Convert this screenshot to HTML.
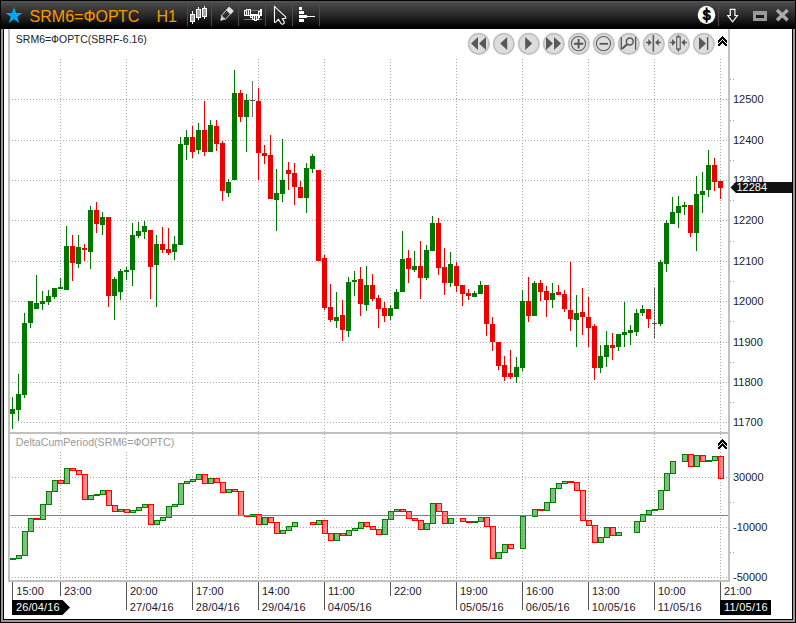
<!DOCTYPE html>
<html><head><meta charset="utf-8"><title>SRM6=ФОРТС H1</title>
<style>
html,body{margin:0;padding:0;background:#fff;}
body{width:796px;height:623px;overflow:hidden;position:relative;font-family:"Liberation Sans", sans-serif;}
svg{position:absolute;left:0;top:0;display:block}
text{font-family:"Liberation Sans", sans-serif;}
.ce{shape-rendering:crispEdges}
</style></head><body>
<svg width="796" height="623" viewBox="0 0 796 623">
<defs>
<linearGradient id="tb" x1="0" y1="0" x2="0" y2="1">
<stop offset="0" stop-color="#4c4c4c"/><stop offset="0.5" stop-color="#292929"/><stop offset="0.98" stop-color="#000"/><stop offset="1" stop-color="#000"/>
</linearGradient>
<radialGradient id="bt" cx="0.5" cy="0.5" r="0.5">
<stop offset="0" stop-color="#e0e0e0"/><stop offset="0.80" stop-color="#dcdcdc"/><stop offset="0.86" stop-color="#c0c0c0"/><stop offset="0.95" stop-color="#c4c4c4"/><stop offset="1" stop-color="#e2e2e2"/>
</radialGradient>
</defs>

<g class="ce">
<rect x="0" y="0" width="796" height="623" fill="#000"/>
<rect x="1" y="1" width="794" height="621" fill="#999"/>
<rect x="3" y="3" width="790" height="617" fill="#000"/>
<rect x="4" y="29" width="788" height="590" fill="#fff"/>
<rect x="0" y="0" width="796" height="29" fill="#000"/><rect x="1" y="1" width="794" height="1" fill="#565656"/><rect x="1" y="2" width="794" height="26" fill="url(#tb)"/>
<rect x="8" y="29" width="2" height="553" fill="#c0c0c0"/>
<rect x="728" y="29" width="2" height="553" fill="#c0c0c0"/>
<rect x="8" y="580" width="722" height="2" fill="#c0c0c0"/>
<rect x="8" y="432" width="722" height="2" fill="#c0c0c0"/>
</g>
<g class="ce" stroke="#a8a8a8" stroke-width="1" stroke-dasharray="1 2" fill="none">
<line x1="9" y1="99.5" x2="727" y2="99.5"/>
<line x1="9" y1="140.5" x2="727" y2="140.5"/>
<line x1="9" y1="180.5" x2="727" y2="180.5"/>
<line x1="9" y1="220.5" x2="727" y2="220.5"/>
<line x1="9" y1="261.5" x2="727" y2="261.5"/>
<line x1="9" y1="301.5" x2="727" y2="301.5"/>
<line x1="9" y1="342.5" x2="727" y2="342.5"/>
<line x1="9" y1="382.5" x2="727" y2="382.5"/>
<line x1="9" y1="422.5" x2="727" y2="422.5"/>
<line x1="9" y1="477.5" x2="727" y2="477.5"/>
<line x1="9" y1="527.5" x2="727" y2="527.5"/>
<line x1="9" y1="577.5" x2="727" y2="577.5"/>
<line x1="60.5" y1="59" x2="60.5" y2="432"/>
<line x1="60.5" y1="452" x2="60.5" y2="580"/><rect x="60" y="434" width="1" height="1" fill="#a8a8a8" stroke="none"/>
<line x1="126.5" y1="59" x2="126.5" y2="432"/>
<line x1="126.5" y1="452" x2="126.5" y2="580"/><rect x="126" y="434" width="1" height="1" fill="#a8a8a8" stroke="none"/>
<line x1="192.5" y1="59" x2="192.5" y2="432"/>
<line x1="192.5" y1="434" x2="192.5" y2="580"/>
<line x1="258.5" y1="59" x2="258.5" y2="432"/>
<line x1="258.5" y1="434" x2="258.5" y2="580"/>
<line x1="324.5" y1="59" x2="324.5" y2="432"/>
<line x1="324.5" y1="434" x2="324.5" y2="580"/>
<line x1="390.5" y1="59" x2="390.5" y2="432"/>
<line x1="390.5" y1="434" x2="390.5" y2="580"/>
<line x1="456.5" y1="59" x2="456.5" y2="432"/>
<line x1="456.5" y1="434" x2="456.5" y2="580"/>
<line x1="522.5" y1="59" x2="522.5" y2="432"/>
<line x1="522.5" y1="434" x2="522.5" y2="580"/>
<line x1="588.5" y1="59" x2="588.5" y2="432"/>
<line x1="588.5" y1="434" x2="588.5" y2="580"/>
<line x1="654.5" y1="59" x2="654.5" y2="432"/>
<line x1="654.5" y1="434" x2="654.5" y2="580"/>
<line x1="720.5" y1="59" x2="720.5" y2="432"/>
<line x1="720.5" y1="434" x2="720.5" y2="580"/>
</g>
<g class="ce" fill="#a8a8a8">
<rect x="730" y="79" width="1" height="1"/><rect x="733" y="79" width="1" height="1"/>
<rect x="730" y="120" width="1" height="1"/><rect x="733" y="120" width="1" height="1"/>
<rect x="730" y="160" width="1" height="1"/><rect x="733" y="160" width="1" height="1"/>
<rect x="730" y="200" width="1" height="1"/><rect x="733" y="200" width="1" height="1"/>
<rect x="730" y="241" width="1" height="1"/><rect x="733" y="241" width="1" height="1"/>
<rect x="730" y="281" width="1" height="1"/><rect x="733" y="281" width="1" height="1"/>
<rect x="730" y="321" width="1" height="1"/><rect x="733" y="321" width="1" height="1"/>
<rect x="730" y="362" width="1" height="1"/><rect x="733" y="362" width="1" height="1"/>
<rect x="730" y="402" width="1" height="1"/><rect x="733" y="402" width="1" height="1"/>
<rect x="730" y="502" width="1" height="1"/><rect x="733" y="502" width="1" height="1"/>
<rect x="730" y="552" width="1" height="1"/><rect x="733" y="552" width="1" height="1"/>
</g>
<g class="ce">
<rect x="12" y="397" width="1" height="32" fill="#007800"/>
<rect x="10" y="409" width="5" height="5" fill="#007800"/>
<rect x="18" y="374" width="1" height="47" fill="#007800"/>
<rect x="16" y="394" width="5" height="16" fill="#007800"/>
<rect x="24" y="313" width="1" height="85" fill="#007800"/>
<rect x="22" y="323" width="5" height="72" fill="#007800"/>
<rect x="30" y="301" width="1" height="27" fill="#007800"/>
<rect x="28" y="301" width="5" height="22" fill="#007800"/>
<rect x="36" y="275" width="1" height="34" fill="#007800"/>
<rect x="34" y="303" width="5" height="6" fill="#007800"/>
<rect x="42" y="291" width="1" height="19" fill="#007800"/>
<rect x="40" y="301" width="5" height="3" fill="#007800"/>
<rect x="48" y="290" width="1" height="15" fill="#007800"/>
<rect x="46" y="296" width="5" height="6" fill="#007800"/>
<rect x="54" y="288" width="1" height="11" fill="#007800"/>
<rect x="52" y="288" width="5" height="9" fill="#007800"/>
<rect x="60" y="278" width="1" height="11" fill="#007800"/>
<rect x="58" y="287" width="5" height="2" fill="#007800"/>
<rect x="66" y="226" width="1" height="64" fill="#007800"/>
<rect x="64" y="246" width="5" height="44" fill="#007800"/>
<rect x="72" y="235" width="1" height="46" fill="#ee0000"/>
<rect x="70" y="246" width="5" height="17" fill="#ee0000"/>
<rect x="78" y="235" width="1" height="33" fill="#007800"/>
<rect x="76" y="247" width="5" height="17" fill="#007800"/>
<rect x="84" y="244" width="1" height="17" fill="#ee0000"/>
<rect x="82" y="248" width="5" height="2" fill="#ee0000"/>
<rect x="90" y="206" width="1" height="63" fill="#007800"/>
<rect x="88" y="210" width="5" height="42" fill="#007800"/>
<rect x="96" y="202" width="1" height="31" fill="#ee0000"/>
<rect x="94" y="210" width="5" height="14" fill="#ee0000"/>
<rect x="102" y="212" width="1" height="23" fill="#007800"/>
<rect x="100" y="217" width="5" height="8" fill="#007800"/>
<rect x="108" y="217" width="1" height="90" fill="#ee0000"/>
<rect x="106" y="217" width="5" height="79" fill="#ee0000"/>
<rect x="114" y="277" width="1" height="43" fill="#007800"/>
<rect x="112" y="279" width="5" height="17" fill="#007800"/>
<rect x="120" y="269" width="1" height="31" fill="#007800"/>
<rect x="118" y="271" width="5" height="21" fill="#007800"/>
<rect x="126" y="267" width="1" height="13" fill="#007800"/>
<rect x="124" y="270" width="5" height="2" fill="#007800"/>
<rect x="132" y="223" width="1" height="63" fill="#007800"/>
<rect x="130" y="235" width="5" height="35" fill="#007800"/>
<rect x="138" y="222" width="1" height="16" fill="#007800"/>
<rect x="136" y="231" width="5" height="5" fill="#007800"/>
<rect x="144" y="221" width="1" height="18" fill="#007800"/>
<rect x="142" y="226" width="5" height="6" fill="#007800"/>
<rect x="150" y="230" width="1" height="69" fill="#ee0000"/>
<rect x="148" y="230" width="5" height="37" fill="#ee0000"/>
<rect x="156" y="235" width="1" height="72" fill="#007800"/>
<rect x="154" y="244" width="5" height="21" fill="#007800"/>
<rect x="162" y="227" width="1" height="26" fill="#ee0000"/>
<rect x="160" y="244" width="5" height="6" fill="#ee0000"/>
<rect x="168" y="228" width="1" height="27" fill="#ee0000"/>
<rect x="166" y="249" width="5" height="4" fill="#ee0000"/>
<rect x="174" y="236" width="1" height="24" fill="#007800"/>
<rect x="172" y="244" width="5" height="8" fill="#007800"/>
<rect x="180" y="137" width="1" height="108" fill="#007800"/>
<rect x="178" y="144" width="5" height="101" fill="#007800"/>
<rect x="186" y="130" width="1" height="30" fill="#007800"/>
<rect x="184" y="137" width="5" height="8" fill="#007800"/>
<rect x="192" y="126" width="1" height="32" fill="#ee0000"/>
<rect x="190" y="137" width="5" height="15" fill="#ee0000"/>
<rect x="198" y="123" width="1" height="31" fill="#007800"/>
<rect x="196" y="130" width="5" height="20" fill="#007800"/>
<rect x="204" y="101" width="1" height="55" fill="#ee0000"/>
<rect x="202" y="130" width="5" height="22" fill="#ee0000"/>
<rect x="210" y="120" width="1" height="32" fill="#007800"/>
<rect x="208" y="125" width="5" height="27" fill="#007800"/>
<rect x="216" y="120" width="1" height="31" fill="#ee0000"/>
<rect x="214" y="126" width="5" height="18" fill="#ee0000"/>
<rect x="222" y="141" width="1" height="60" fill="#ee0000"/>
<rect x="220" y="143" width="5" height="48" fill="#ee0000"/>
<rect x="228" y="179" width="1" height="18" fill="#007800"/>
<rect x="226" y="182" width="5" height="11" fill="#007800"/>
<rect x="234" y="70" width="1" height="110" fill="#007800"/>
<rect x="232" y="93" width="5" height="87" fill="#007800"/>
<rect x="240" y="90" width="1" height="32" fill="#ee0000"/>
<rect x="238" y="93" width="5" height="24" fill="#ee0000"/>
<rect x="246" y="94" width="1" height="58" fill="#007800"/>
<rect x="244" y="100" width="5" height="17" fill="#007800"/>
<rect x="252" y="81" width="1" height="36" fill="#707070"/>
<rect x="250" y="100" width="5" height="1" fill="#505050"/>
<rect x="258" y="88" width="1" height="92" fill="#ee0000"/>
<rect x="256" y="101" width="5" height="52" fill="#ee0000"/>
<rect x="264" y="145" width="1" height="19" fill="#ee0000"/>
<rect x="262" y="153" width="5" height="3" fill="#ee0000"/>
<rect x="270" y="135" width="1" height="64" fill="#ee0000"/>
<rect x="268" y="155" width="5" height="44" fill="#ee0000"/>
<rect x="276" y="169" width="1" height="62" fill="#007800"/>
<rect x="274" y="193" width="5" height="7" fill="#007800"/>
<rect x="282" y="139" width="1" height="63" fill="#007800"/>
<rect x="280" y="180" width="5" height="14" fill="#007800"/>
<rect x="288" y="162" width="1" height="28" fill="#ee0000"/>
<rect x="286" y="170" width="5" height="4" fill="#ee0000"/>
<rect x="294" y="163" width="1" height="42" fill="#ee0000"/>
<rect x="292" y="173" width="5" height="14" fill="#ee0000"/>
<rect x="300" y="181" width="1" height="17" fill="#ee0000"/>
<rect x="298" y="187" width="5" height="11" fill="#ee0000"/>
<rect x="306" y="163" width="1" height="50" fill="#007800"/>
<rect x="304" y="168" width="5" height="30" fill="#007800"/>
<rect x="312" y="154" width="1" height="19" fill="#007800"/>
<rect x="310" y="156" width="5" height="13" fill="#007800"/>
<rect x="318" y="170" width="1" height="91" fill="#ee0000"/>
<rect x="316" y="170" width="5" height="91" fill="#ee0000"/>
<rect x="324" y="255" width="1" height="55" fill="#ee0000"/>
<rect x="322" y="258" width="5" height="50" fill="#ee0000"/>
<rect x="330" y="284" width="1" height="38" fill="#ee0000"/>
<rect x="328" y="307" width="5" height="13" fill="#ee0000"/>
<rect x="336" y="292" width="1" height="36" fill="#007800"/>
<rect x="334" y="317" width="5" height="4" fill="#007800"/>
<rect x="342" y="300" width="1" height="41" fill="#ee0000"/>
<rect x="340" y="315" width="5" height="15" fill="#ee0000"/>
<rect x="348" y="277" width="1" height="60" fill="#007800"/>
<rect x="346" y="282" width="5" height="49" fill="#007800"/>
<rect x="354" y="271" width="1" height="25" fill="#007800"/>
<rect x="352" y="280" width="5" height="2" fill="#007800"/>
<rect x="360" y="267" width="1" height="49" fill="#ee0000"/>
<rect x="358" y="279" width="5" height="25" fill="#ee0000"/>
<rect x="366" y="266" width="1" height="45" fill="#007800"/>
<rect x="364" y="285" width="5" height="20" fill="#007800"/>
<rect x="372" y="274" width="1" height="27" fill="#ee0000"/>
<rect x="370" y="285" width="5" height="14" fill="#ee0000"/>
<rect x="378" y="295" width="1" height="33" fill="#ee0000"/>
<rect x="376" y="298" width="5" height="11" fill="#ee0000"/>
<rect x="384" y="302" width="1" height="20" fill="#ee0000"/>
<rect x="382" y="308" width="5" height="8" fill="#ee0000"/>
<rect x="390" y="305" width="1" height="15" fill="#007800"/>
<rect x="388" y="308" width="5" height="8" fill="#007800"/>
<rect x="396" y="289" width="1" height="20" fill="#007800"/>
<rect x="394" y="292" width="5" height="17" fill="#007800"/>
<rect x="402" y="231" width="1" height="61" fill="#007800"/>
<rect x="400" y="259" width="5" height="33" fill="#007800"/>
<rect x="408" y="250" width="1" height="33" fill="#ee0000"/>
<rect x="406" y="258" width="5" height="11" fill="#ee0000"/>
<rect x="414" y="251" width="1" height="21" fill="#007800"/>
<rect x="412" y="266" width="5" height="4" fill="#007800"/>
<rect x="420" y="241" width="1" height="58" fill="#ee0000"/>
<rect x="418" y="266" width="5" height="12" fill="#ee0000"/>
<rect x="426" y="245" width="1" height="35" fill="#007800"/>
<rect x="424" y="250" width="5" height="28" fill="#007800"/>
<rect x="432" y="216" width="1" height="35" fill="#007800"/>
<rect x="430" y="223" width="5" height="28" fill="#007800"/>
<rect x="438" y="218" width="1" height="57" fill="#ee0000"/>
<rect x="436" y="223" width="5" height="45" fill="#ee0000"/>
<rect x="444" y="248" width="1" height="47" fill="#ee0000"/>
<rect x="442" y="267" width="5" height="16" fill="#ee0000"/>
<rect x="450" y="252" width="1" height="35" fill="#007800"/>
<rect x="448" y="264" width="5" height="19" fill="#007800"/>
<rect x="456" y="262" width="1" height="30" fill="#ee0000"/>
<rect x="454" y="266" width="5" height="20" fill="#ee0000"/>
<rect x="462" y="285" width="1" height="21" fill="#ee0000"/>
<rect x="460" y="285" width="5" height="9" fill="#ee0000"/>
<rect x="468" y="289" width="1" height="11" fill="#ee0000"/>
<rect x="466" y="293" width="5" height="3" fill="#ee0000"/>
<rect x="474" y="291" width="1" height="6" fill="#007800"/>
<rect x="472" y="293" width="5" height="4" fill="#007800"/>
<rect x="480" y="281" width="1" height="13" fill="#007800"/>
<rect x="478" y="285" width="5" height="9" fill="#007800"/>
<rect x="486" y="285" width="1" height="51" fill="#ee0000"/>
<rect x="484" y="285" width="5" height="39" fill="#ee0000"/>
<rect x="492" y="317" width="1" height="34" fill="#ee0000"/>
<rect x="490" y="324" width="5" height="18" fill="#ee0000"/>
<rect x="498" y="342" width="1" height="28" fill="#ee0000"/>
<rect x="496" y="342" width="5" height="24" fill="#ee0000"/>
<rect x="504" y="356" width="1" height="25" fill="#ee0000"/>
<rect x="502" y="365" width="5" height="12" fill="#ee0000"/>
<rect x="510" y="350" width="1" height="29" fill="#ee0000"/>
<rect x="508" y="373" width="5" height="4" fill="#ee0000"/>
<rect x="516" y="357" width="1" height="26" fill="#007800"/>
<rect x="514" y="367" width="5" height="10" fill="#007800"/>
<rect x="522" y="290" width="1" height="81" fill="#007800"/>
<rect x="520" y="301" width="5" height="67" fill="#007800"/>
<rect x="528" y="277" width="1" height="45" fill="#ee0000"/>
<rect x="526" y="301" width="5" height="15" fill="#ee0000"/>
<rect x="534" y="281" width="1" height="35" fill="#007800"/>
<rect x="532" y="283" width="5" height="33" fill="#007800"/>
<rect x="540" y="280" width="1" height="21" fill="#ee0000"/>
<rect x="538" y="283" width="5" height="9" fill="#ee0000"/>
<rect x="546" y="286" width="1" height="31" fill="#ee0000"/>
<rect x="544" y="291" width="5" height="9" fill="#ee0000"/>
<rect x="552" y="283" width="1" height="25" fill="#007800"/>
<rect x="550" y="293" width="5" height="7" fill="#007800"/>
<rect x="558" y="285" width="1" height="10" fill="#ee0000"/>
<rect x="556" y="292" width="5" height="3" fill="#ee0000"/>
<rect x="564" y="290" width="1" height="22" fill="#ee0000"/>
<rect x="562" y="294" width="5" height="15" fill="#ee0000"/>
<rect x="570" y="262" width="1" height="69" fill="#ee0000"/>
<rect x="568" y="310" width="5" height="9" fill="#ee0000"/>
<rect x="576" y="295" width="1" height="52" fill="#007800"/>
<rect x="574" y="313" width="5" height="7" fill="#007800"/>
<rect x="582" y="288" width="1" height="47" fill="#ee0000"/>
<rect x="580" y="312" width="5" height="5" fill="#ee0000"/>
<rect x="588" y="297" width="1" height="50" fill="#ee0000"/>
<rect x="586" y="317" width="5" height="11" fill="#ee0000"/>
<rect x="594" y="324" width="1" height="56" fill="#ee0000"/>
<rect x="592" y="326" width="5" height="42" fill="#ee0000"/>
<rect x="600" y="345" width="1" height="28" fill="#007800"/>
<rect x="598" y="356" width="5" height="12" fill="#007800"/>
<rect x="606" y="331" width="1" height="36" fill="#007800"/>
<rect x="604" y="345" width="5" height="12" fill="#007800"/>
<rect x="612" y="333" width="1" height="27" fill="#ee0000"/>
<rect x="610" y="345" width="5" height="3" fill="#ee0000"/>
<rect x="618" y="334" width="1" height="17" fill="#007800"/>
<rect x="616" y="334" width="5" height="13" fill="#007800"/>
<rect x="624" y="302" width="1" height="45" fill="#007800"/>
<rect x="622" y="332" width="5" height="3" fill="#007800"/>
<rect x="630" y="325" width="1" height="20" fill="#007800"/>
<rect x="628" y="330" width="5" height="3" fill="#007800"/>
<rect x="636" y="309" width="1" height="27" fill="#007800"/>
<rect x="634" y="313" width="5" height="19" fill="#007800"/>
<rect x="642" y="305" width="1" height="11" fill="#007800"/>
<rect x="640" y="309" width="5" height="4" fill="#007800"/>
<rect x="648" y="309" width="1" height="19" fill="#ee0000"/>
<rect x="646" y="309" width="5" height="10" fill="#ee0000"/>
<rect x="654" y="287" width="1" height="51" fill="#707070"/>
<rect x="654" y="287" width="1" height="51" fill="#484848"/>
<rect x="654" y="287" width="1" height="1" fill="#9a9a9a"/>
<rect x="654" y="290" width="1" height="1" fill="#9a9a9a"/>
<rect x="654" y="293" width="1" height="1" fill="#9a9a9a"/>
<rect x="654" y="296" width="1" height="1" fill="#9a9a9a"/>
<rect x="654" y="299" width="1" height="1" fill="#9a9a9a"/>
<rect x="654" y="302" width="1" height="1" fill="#9a9a9a"/>
<rect x="654" y="305" width="1" height="1" fill="#9a9a9a"/>
<rect x="654" y="308" width="1" height="1" fill="#9a9a9a"/>
<rect x="654" y="311" width="1" height="1" fill="#9a9a9a"/>
<rect x="654" y="314" width="1" height="1" fill="#9a9a9a"/>
<rect x="654" y="317" width="1" height="1" fill="#9a9a9a"/>
<rect x="654" y="320" width="1" height="1" fill="#9a9a9a"/>
<rect x="654" y="323" width="1" height="1" fill="#9a9a9a"/>
<rect x="654" y="326" width="1" height="1" fill="#9a9a9a"/>
<rect x="654" y="329" width="1" height="1" fill="#9a9a9a"/>
<rect x="654" y="332" width="1" height="1" fill="#9a9a9a"/>
<rect x="654" y="335" width="1" height="1" fill="#9a9a9a"/>
<rect x="652" y="323" width="5" height="1" fill="#505050"/>
<rect x="660" y="260" width="1" height="66" fill="#007800"/>
<rect x="658" y="262" width="5" height="62" fill="#007800"/>
<rect x="666" y="220" width="1" height="52" fill="#007800"/>
<rect x="664" y="223" width="5" height="41" fill="#007800"/>
<rect x="672" y="197" width="1" height="27" fill="#007800"/>
<rect x="670" y="212" width="5" height="12" fill="#007800"/>
<rect x="678" y="196" width="1" height="32" fill="#007800"/>
<rect x="676" y="206" width="5" height="7" fill="#007800"/>
<rect x="684" y="202" width="1" height="13" fill="#007800"/>
<rect x="682" y="205" width="5" height="2" fill="#007800"/>
<rect x="690" y="205" width="1" height="32" fill="#ee0000"/>
<rect x="688" y="205" width="5" height="28" fill="#ee0000"/>
<rect x="696" y="176" width="1" height="75" fill="#007800"/>
<rect x="694" y="194" width="5" height="39" fill="#007800"/>
<rect x="702" y="172" width="1" height="41" fill="#007800"/>
<rect x="700" y="191" width="5" height="4" fill="#007800"/>
<rect x="708" y="150" width="1" height="47" fill="#007800"/>
<rect x="706" y="165" width="5" height="25" fill="#007800"/>
<rect x="714" y="158" width="1" height="33" fill="#ee0000"/>
<rect x="712" y="165" width="5" height="17" fill="#ee0000"/>
<rect x="720" y="181" width="1" height="18" fill="#ee0000"/>
<rect x="718" y="181" width="5" height="7" fill="#ee0000"/>
</g>
<g class="ce">
<rect x="10" y="558" width="6" height="2" fill="#008000"/>
<rect x="17" y="556" width="4" height="2" fill="rgba(0,128,0,0.5)"/>
<path d="M16 555h6v4h-6z M17 556v2h4v-2z" fill="#008000" fill-rule="evenodd"/>
<rect x="23" y="532" width="4" height="23" fill="rgba(0,128,0,0.5)"/>
<path d="M22 531h6v25h-6z M23 532v23h4v-23z" fill="#008000" fill-rule="evenodd"/>
<rect x="29" y="519" width="4" height="12" fill="rgba(0,128,0,0.5)"/>
<path d="M28 518h6v14h-6z M29 519v12h4v-12z" fill="#008000" fill-rule="evenodd"/>
<rect x="34" y="518" width="6" height="2" fill="#ff0000"/>
<rect x="41" y="505" width="4" height="14" fill="rgba(0,128,0,0.5)"/>
<path d="M40 504h6v16h-6z M41 505v14h4v-14z" fill="#008000" fill-rule="evenodd"/>
<rect x="47" y="492" width="4" height="12" fill="rgba(0,128,0,0.5)"/>
<path d="M46 491h6v14h-6z M47 492v12h4v-12z" fill="#008000" fill-rule="evenodd"/>
<rect x="53" y="481" width="4" height="10" fill="rgba(0,128,0,0.5)"/>
<path d="M52 480h6v12h-6z M53 481v10h4v-10z" fill="#008000" fill-rule="evenodd"/>
<rect x="59" y="481" width="4" height="2" fill="rgba(255,0,0,0.46)"/>
<path d="M58 480h6v4h-6z M59 481v2h4v-2z" fill="#ff0000" fill-rule="evenodd"/>
<rect x="65" y="469" width="4" height="14" fill="rgba(0,128,0,0.5)"/>
<path d="M64 468h6v16h-6z M65 469v14h4v-14z" fill="#008000" fill-rule="evenodd"/>
<rect x="71" y="469" width="4" height="1" fill="rgba(255,0,0,0.46)"/>
<path d="M70 468h6v3h-6z M71 469v1h4v-1z" fill="#ff0000" fill-rule="evenodd"/>
<rect x="77" y="471" width="4" height="3" fill="rgba(255,0,0,0.46)"/>
<path d="M76 470h6v5h-6z M77 471v3h4v-3z" fill="#ff0000" fill-rule="evenodd"/>
<rect x="83" y="475" width="4" height="24" fill="rgba(255,0,0,0.46)"/>
<path d="M82 474h6v26h-6z M83 475v24h4v-24z" fill="#ff0000" fill-rule="evenodd"/>
<rect x="89" y="496" width="4" height="3" fill="rgba(0,128,0,0.5)"/>
<path d="M88 495h6v5h-6z M89 496v3h4v-3z" fill="#008000" fill-rule="evenodd"/>
<rect x="94" y="494" width="6" height="2" fill="#008000"/>
<rect x="101" y="491" width="4" height="3" fill="rgba(0,128,0,0.5)"/>
<path d="M100 490h6v5h-6z M101 491v3h4v-3z" fill="#008000" fill-rule="evenodd"/>
<rect x="107" y="491" width="4" height="14" fill="rgba(255,0,0,0.46)"/>
<path d="M106 490h6v16h-6z M107 491v14h4v-14z" fill="#ff0000" fill-rule="evenodd"/>
<rect x="113" y="506" width="4" height="5" fill="rgba(255,0,0,0.46)"/>
<path d="M112 505h6v7h-6z M113 506v5h4v-5z" fill="#ff0000" fill-rule="evenodd"/>
<rect x="119" y="510" width="4" height="1" fill="rgba(0,128,0,0.5)"/>
<path d="M118 509h6v3h-6z M119 510v1h4v-1z" fill="#008000" fill-rule="evenodd"/>
<rect x="125" y="510" width="4" height="2" fill="rgba(255,0,0,0.46)"/>
<path d="M124 509h6v4h-6z M125 510v2h4v-2z" fill="#ff0000" fill-rule="evenodd"/>
<rect x="131" y="511" width="4" height="1" fill="rgba(0,128,0,0.5)"/>
<path d="M130 510h6v3h-6z M131 511v1h4v-1z" fill="#008000" fill-rule="evenodd"/>
<rect x="137" y="508" width="4" height="2" fill="rgba(0,128,0,0.5)"/>
<path d="M136 507h6v4h-6z M137 508v2h4v-2z" fill="#008000" fill-rule="evenodd"/>
<rect x="143" y="505" width="4" height="2" fill="rgba(0,128,0,0.5)"/>
<path d="M142 504h6v4h-6z M143 505v2h4v-2z" fill="#008000" fill-rule="evenodd"/>
<rect x="149" y="505" width="4" height="19" fill="rgba(255,0,0,0.46)"/>
<path d="M148 504h6v21h-6z M149 505v19h4v-19z" fill="#ff0000" fill-rule="evenodd"/>
<rect x="155" y="521" width="4" height="3" fill="rgba(0,128,0,0.5)"/>
<path d="M154 520h6v5h-6z M155 521v3h4v-3z" fill="#008000" fill-rule="evenodd"/>
<rect x="161" y="518" width="4" height="2" fill="rgba(0,128,0,0.5)"/>
<path d="M160 517h6v4h-6z M161 518v2h4v-2z" fill="#008000" fill-rule="evenodd"/>
<rect x="167" y="507" width="4" height="10" fill="rgba(0,128,0,0.5)"/>
<path d="M166 506h6v12h-6z M167 507v10h4v-10z" fill="#008000" fill-rule="evenodd"/>
<rect x="173" y="505" width="4" height="1" fill="rgba(0,128,0,0.5)"/>
<path d="M172 504h6v3h-6z M173 505v1h4v-1z" fill="#008000" fill-rule="evenodd"/>
<rect x="179" y="484" width="4" height="20" fill="rgba(0,128,0,0.5)"/>
<path d="M178 483h6v22h-6z M179 484v20h4v-20z" fill="#008000" fill-rule="evenodd"/>
<rect x="185" y="482" width="4" height="1" fill="rgba(0,128,0,0.5)"/>
<path d="M184 481h6v3h-6z M185 482v1h4v-1z" fill="#008000" fill-rule="evenodd"/>
<rect x="191" y="480" width="4" height="1" fill="rgba(0,128,0,0.5)"/>
<path d="M190 479h6v3h-6z M191 480v1h4v-1z" fill="#008000" fill-rule="evenodd"/>
<rect x="197" y="475" width="4" height="4" fill="rgba(0,128,0,0.5)"/>
<path d="M196 474h6v6h-6z M197 475v4h4v-4z" fill="#008000" fill-rule="evenodd"/>
<rect x="203" y="475" width="4" height="8" fill="rgba(255,0,0,0.46)"/>
<path d="M202 474h6v10h-6z M203 475v8h4v-8z" fill="#ff0000" fill-rule="evenodd"/>
<rect x="209" y="479" width="4" height="4" fill="rgba(0,128,0,0.5)"/>
<path d="M208 478h6v6h-6z M209 479v4h4v-4z" fill="#008000" fill-rule="evenodd"/>
<rect x="215" y="479" width="4" height="3" fill="rgba(255,0,0,0.46)"/>
<path d="M214 478h6v5h-6z M215 479v3h4v-3z" fill="#ff0000" fill-rule="evenodd"/>
<rect x="221" y="483" width="4" height="9" fill="rgba(255,0,0,0.46)"/>
<path d="M220 482h6v11h-6z M221 483v9h4v-9z" fill="#ff0000" fill-rule="evenodd"/>
<rect x="227" y="490" width="4" height="2" fill="rgba(0,128,0,0.5)"/>
<path d="M226 489h6v4h-6z M227 490v2h4v-2z" fill="#008000" fill-rule="evenodd"/>
<rect x="233" y="490" width="4" height="1" fill="rgba(255,0,0,0.46)"/>
<path d="M232 489h6v3h-6z M233 490v1h4v-1z" fill="#ff0000" fill-rule="evenodd"/>
<rect x="239" y="492" width="4" height="23" fill="rgba(255,0,0,0.46)"/>
<path d="M238 491h6v25h-6z M239 492v23h4v-23z" fill="#ff0000" fill-rule="evenodd"/>
<rect x="244" y="515" width="6" height="2" fill="#ff0000"/>
<rect x="251" y="515" width="4" height="1" fill="rgba(0,128,0,0.5)"/>
<path d="M250 514h6v3h-6z M251 515v1h4v-1z" fill="#008000" fill-rule="evenodd"/>
<rect x="257" y="515" width="4" height="9" fill="rgba(255,0,0,0.46)"/>
<path d="M256 514h6v11h-6z M257 515v9h4v-9z" fill="#ff0000" fill-rule="evenodd"/>
<rect x="263" y="518" width="4" height="6" fill="rgba(0,128,0,0.5)"/>
<path d="M262 517h6v8h-6z M263 518v6h4v-6z" fill="#008000" fill-rule="evenodd"/>
<rect x="269" y="518" width="4" height="4" fill="rgba(255,0,0,0.46)"/>
<path d="M268 517h6v6h-6z M269 518v4h4v-4z" fill="#ff0000" fill-rule="evenodd"/>
<rect x="275" y="523" width="4" height="10" fill="rgba(255,0,0,0.46)"/>
<path d="M274 522h6v12h-6z M275 523v10h4v-10z" fill="#ff0000" fill-rule="evenodd"/>
<rect x="281" y="531" width="4" height="2" fill="rgba(0,128,0,0.5)"/>
<path d="M280 530h6v4h-6z M281 531v2h4v-2z" fill="#008000" fill-rule="evenodd"/>
<rect x="287" y="527" width="4" height="3" fill="rgba(0,128,0,0.5)"/>
<path d="M286 526h6v5h-6z M287 527v3h4v-3z" fill="#008000" fill-rule="evenodd"/>
<rect x="293" y="523" width="4" height="3" fill="rgba(0,128,0,0.5)"/>
<path d="M292 522h6v5h-6z M293 523v3h4v-3z" fill="#008000" fill-rule="evenodd"/>
<rect x="311" y="523" width="4" height="1" fill="rgba(255,0,0,0.46)"/>
<path d="M310 522h6v3h-6z M311 523v1h4v-1z" fill="#ff0000" fill-rule="evenodd"/>
<rect x="317" y="521" width="4" height="3" fill="rgba(0,128,0,0.5)"/>
<path d="M316 520h6v5h-6z M317 521v3h4v-3z" fill="#008000" fill-rule="evenodd"/>
<rect x="323" y="521" width="4" height="12" fill="rgba(255,0,0,0.46)"/>
<path d="M322 520h6v14h-6z M323 521v12h4v-12z" fill="#ff0000" fill-rule="evenodd"/>
<rect x="329" y="534" width="4" height="6" fill="rgba(255,0,0,0.46)"/>
<path d="M328 533h6v8h-6z M329 534v6h4v-6z" fill="#ff0000" fill-rule="evenodd"/>
<rect x="335" y="534" width="4" height="6" fill="rgba(0,128,0,0.5)"/>
<path d="M334 533h6v8h-6z M335 534v6h4v-6z" fill="#008000" fill-rule="evenodd"/>
<rect x="341" y="534" width="4" height="1" fill="rgba(255,0,0,0.46)"/>
<path d="M340 533h6v3h-6z M341 534v1h4v-1z" fill="#ff0000" fill-rule="evenodd"/>
<rect x="347" y="531" width="4" height="4" fill="rgba(0,128,0,0.5)"/>
<path d="M346 530h6v6h-6z M347 531v4h4v-4z" fill="#008000" fill-rule="evenodd"/>
<rect x="353" y="529" width="4" height="1" fill="rgba(0,128,0,0.5)"/>
<path d="M352 528h6v3h-6z M353 529v1h4v-1z" fill="#008000" fill-rule="evenodd"/>
<rect x="359" y="523" width="4" height="5" fill="rgba(0,128,0,0.5)"/>
<path d="M358 522h6v7h-6z M359 523v5h4v-5z" fill="#008000" fill-rule="evenodd"/>
<rect x="365" y="523" width="4" height="3" fill="rgba(255,0,0,0.46)"/>
<path d="M364 522h6v5h-6z M365 523v3h4v-3z" fill="#ff0000" fill-rule="evenodd"/>
<rect x="371" y="527" width="4" height="2" fill="rgba(255,0,0,0.46)"/>
<path d="M370 526h6v4h-6z M371 527v2h4v-2z" fill="#ff0000" fill-rule="evenodd"/>
<rect x="377" y="530" width="4" height="4" fill="rgba(255,0,0,0.46)"/>
<path d="M376 529h6v6h-6z M377 530v4h4v-4z" fill="#ff0000" fill-rule="evenodd"/>
<rect x="383" y="520" width="4" height="14" fill="rgba(0,128,0,0.5)"/>
<path d="M382 519h6v16h-6z M383 520v14h4v-14z" fill="#008000" fill-rule="evenodd"/>
<rect x="389" y="512" width="4" height="7" fill="rgba(0,128,0,0.5)"/>
<path d="M388 511h6v9h-6z M389 512v7h4v-7z" fill="#008000" fill-rule="evenodd"/>
<rect x="395" y="510" width="4" height="1" fill="rgba(0,128,0,0.5)"/>
<path d="M394 509h6v3h-6z M395 510v1h4v-1z" fill="#008000" fill-rule="evenodd"/>
<rect x="401" y="510" width="4" height="1" fill="rgba(255,0,0,0.46)"/>
<path d="M400 509h6v3h-6z M401 510v1h4v-1z" fill="#ff0000" fill-rule="evenodd"/>
<rect x="407" y="512" width="4" height="6" fill="rgba(255,0,0,0.46)"/>
<path d="M406 511h6v8h-6z M407 512v6h4v-6z" fill="#ff0000" fill-rule="evenodd"/>
<rect x="413" y="519" width="4" height="1" fill="rgba(255,0,0,0.46)"/>
<path d="M412 518h6v3h-6z M413 519v1h4v-1z" fill="#ff0000" fill-rule="evenodd"/>
<rect x="419" y="521" width="4" height="8" fill="rgba(255,0,0,0.46)"/>
<path d="M418 520h6v10h-6z M419 521v8h4v-8z" fill="#ff0000" fill-rule="evenodd"/>
<rect x="425" y="524" width="4" height="5" fill="rgba(0,128,0,0.5)"/>
<path d="M424 523h6v7h-6z M425 524v5h4v-5z" fill="#008000" fill-rule="evenodd"/>
<rect x="431" y="504" width="4" height="19" fill="rgba(0,128,0,0.5)"/>
<path d="M430 503h6v21h-6z M431 504v19h4v-19z" fill="#008000" fill-rule="evenodd"/>
<rect x="437" y="504" width="4" height="7" fill="rgba(255,0,0,0.46)"/>
<path d="M436 503h6v9h-6z M437 504v7h4v-7z" fill="#ff0000" fill-rule="evenodd"/>
<rect x="443" y="512" width="4" height="11" fill="rgba(255,0,0,0.46)"/>
<path d="M442 511h6v13h-6z M443 512v11h4v-11z" fill="#ff0000" fill-rule="evenodd"/>
<rect x="449" y="519" width="4" height="4" fill="rgba(0,128,0,0.5)"/>
<path d="M448 518h6v6h-6z M449 519v4h4v-4z" fill="#008000" fill-rule="evenodd"/>
<rect x="461" y="519" width="4" height="2" fill="rgba(255,0,0,0.46)"/>
<path d="M460 518h6v4h-6z M461 519v2h4v-2z" fill="#ff0000" fill-rule="evenodd"/>
<rect x="466" y="521" width="6" height="2" fill="#ff0000"/>
<rect x="472" y="521" width="6" height="2" fill="#008000"/>
<rect x="479" y="518" width="4" height="3" fill="rgba(0,128,0,0.5)"/>
<path d="M478 517h6v5h-6z M479 518v3h4v-3z" fill="#008000" fill-rule="evenodd"/>
<rect x="485" y="518" width="4" height="8" fill="rgba(255,0,0,0.46)"/>
<path d="M484 517h6v10h-6z M485 518v8h4v-8z" fill="#ff0000" fill-rule="evenodd"/>
<rect x="491" y="527" width="4" height="31" fill="rgba(255,0,0,0.46)"/>
<path d="M490 526h6v33h-6z M491 527v31h4v-31z" fill="#ff0000" fill-rule="evenodd"/>
<rect x="497" y="553" width="4" height="5" fill="rgba(0,128,0,0.5)"/>
<path d="M496 552h6v7h-6z M497 553v5h4v-5z" fill="#008000" fill-rule="evenodd"/>
<rect x="503" y="545" width="4" height="7" fill="rgba(0,128,0,0.5)"/>
<path d="M502 544h6v9h-6z M503 545v7h4v-7z" fill="#008000" fill-rule="evenodd"/>
<rect x="509" y="545" width="4" height="3" fill="rgba(255,0,0,0.46)"/>
<path d="M508 544h6v5h-6z M509 545v3h4v-3z" fill="#ff0000" fill-rule="evenodd"/>
<rect x="521" y="517" width="4" height="31" fill="rgba(0,128,0,0.5)"/>
<path d="M520 516h6v33h-6z M521 517v31h4v-31z" fill="#008000" fill-rule="evenodd"/>
<rect x="533" y="510" width="4" height="6" fill="rgba(0,128,0,0.5)"/>
<path d="M532 509h6v8h-6z M533 510v6h4v-6z" fill="#008000" fill-rule="evenodd"/>
<rect x="538" y="509" width="6" height="2" fill="#ff0000"/>
<rect x="545" y="503" width="4" height="7" fill="rgba(0,128,0,0.5)"/>
<path d="M544 502h6v9h-6z M545 503v7h4v-7z" fill="#008000" fill-rule="evenodd"/>
<rect x="551" y="489" width="4" height="13" fill="rgba(0,128,0,0.5)"/>
<path d="M550 488h6v15h-6z M551 489v13h4v-13z" fill="#008000" fill-rule="evenodd"/>
<rect x="557" y="484" width="4" height="4" fill="rgba(0,128,0,0.5)"/>
<path d="M556 483h6v6h-6z M557 484v4h4v-4z" fill="#008000" fill-rule="evenodd"/>
<rect x="563" y="482" width="4" height="1" fill="rgba(0,128,0,0.5)"/>
<path d="M562 481h6v3h-6z M563 482v1h4v-1z" fill="#008000" fill-rule="evenodd"/>
<rect x="568" y="481" width="6" height="2" fill="#ff0000"/>
<rect x="575" y="483" width="4" height="7" fill="rgba(255,0,0,0.46)"/>
<path d="M574 482h6v9h-6z M575 483v7h4v-7z" fill="#ff0000" fill-rule="evenodd"/>
<rect x="581" y="491" width="4" height="29" fill="rgba(255,0,0,0.46)"/>
<path d="M580 490h6v31h-6z M581 491v29h4v-29z" fill="#ff0000" fill-rule="evenodd"/>
<rect x="587" y="521" width="4" height="4" fill="rgba(255,0,0,0.46)"/>
<path d="M586 520h6v6h-6z M587 521v4h4v-4z" fill="#ff0000" fill-rule="evenodd"/>
<rect x="593" y="526" width="4" height="16" fill="rgba(255,0,0,0.46)"/>
<path d="M592 525h6v18h-6z M593 526v16h4v-16z" fill="#ff0000" fill-rule="evenodd"/>
<rect x="599" y="538" width="4" height="4" fill="rgba(0,128,0,0.5)"/>
<path d="M598 537h6v6h-6z M599 538v4h4v-4z" fill="#008000" fill-rule="evenodd"/>
<rect x="605" y="528" width="4" height="9" fill="rgba(0,128,0,0.5)"/>
<path d="M604 527h6v11h-6z M605 528v9h4v-9z" fill="#008000" fill-rule="evenodd"/>
<rect x="611" y="528" width="4" height="7" fill="rgba(255,0,0,0.46)"/>
<path d="M610 527h6v9h-6z M611 528v7h4v-7z" fill="#ff0000" fill-rule="evenodd"/>
<rect x="617" y="533" width="4" height="2" fill="rgba(0,128,0,0.5)"/>
<path d="M616 532h6v4h-6z M617 533v2h4v-2z" fill="#008000" fill-rule="evenodd"/>
<rect x="635" y="522" width="4" height="10" fill="rgba(0,128,0,0.5)"/>
<path d="M634 521h6v12h-6z M635 522v10h4v-10z" fill="#008000" fill-rule="evenodd"/>
<rect x="641" y="515" width="4" height="6" fill="rgba(0,128,0,0.5)"/>
<path d="M640 514h6v8h-6z M641 515v6h4v-6z" fill="#008000" fill-rule="evenodd"/>
<rect x="647" y="511" width="4" height="3" fill="rgba(0,128,0,0.5)"/>
<path d="M646 510h6v5h-6z M647 511v3h4v-3z" fill="#008000" fill-rule="evenodd"/>
<rect x="652" y="509" width="6" height="2" fill="#008000"/>
<rect x="659" y="491" width="4" height="18" fill="rgba(0,128,0,0.5)"/>
<path d="M658 490h6v20h-6z M659 491v18h4v-18z" fill="#008000" fill-rule="evenodd"/>
<rect x="665" y="474" width="4" height="16" fill="rgba(0,128,0,0.5)"/>
<path d="M664 473h6v18h-6z M665 474v16h4v-16z" fill="#008000" fill-rule="evenodd"/>
<rect x="671" y="462" width="4" height="11" fill="rgba(0,128,0,0.5)"/>
<path d="M670 461h6v13h-6z M671 462v11h4v-11z" fill="#008000" fill-rule="evenodd"/>
<rect x="683" y="455" width="4" height="6" fill="rgba(0,128,0,0.5)"/>
<path d="M682 454h6v8h-6z M683 455v6h4v-6z" fill="#008000" fill-rule="evenodd"/>
<rect x="689" y="455" width="4" height="11" fill="rgba(255,0,0,0.46)"/>
<path d="M688 454h6v13h-6z M689 455v11h4v-11z" fill="#ff0000" fill-rule="evenodd"/>
<rect x="695" y="456" width="4" height="10" fill="rgba(0,128,0,0.5)"/>
<path d="M694 455h6v12h-6z M695 456v10h4v-10z" fill="#008000" fill-rule="evenodd"/>
<rect x="701" y="456" width="4" height="5" fill="rgba(255,0,0,0.46)"/>
<path d="M700 455h6v7h-6z M701 456v5h4v-5z" fill="#ff0000" fill-rule="evenodd"/>
<rect x="706" y="460" width="6" height="2" fill="#008000"/>
<rect x="713" y="457" width="4" height="3" fill="rgba(0,128,0,0.5)"/>
<path d="M712 456h6v5h-6z M713 457v3h4v-3z" fill="#008000" fill-rule="evenodd"/>
<rect x="719" y="457" width="4" height="21" fill="rgba(255,0,0,0.46)"/>
<path d="M718 456h6v23h-6z M719 457v21h4v-21z" fill="#ff0000" fill-rule="evenodd"/>
</g>
<rect class="ce" x="10" y="515" width="718" height="1" fill="#808080"/>
<text x="733" y="102.5" font-size="11" fill="#1a1a2a" text-anchor="start" >12500</text>
<text x="733" y="143.5" font-size="11" fill="#1a1a2a" text-anchor="start" >12400</text>
<text x="733" y="183.5" font-size="11" fill="#1a1a2a" text-anchor="start" >12300</text>
<text x="733" y="223.5" font-size="11" fill="#1a1a2a" text-anchor="start" >12200</text>
<text x="733" y="264.5" font-size="11" fill="#1a1a2a" text-anchor="start" >12100</text>
<text x="733" y="304.5" font-size="11" fill="#1a1a2a" text-anchor="start" >12000</text>
<text x="733" y="345.5" font-size="11" fill="#1a1a2a" text-anchor="start" >11900</text>
<text x="733" y="385.5" font-size="11" fill="#1a1a2a" text-anchor="start" >11800</text>
<text x="733" y="425.5" font-size="11" fill="#1a1a2a" text-anchor="start" >11700</text>
<text x="733" y="480.5" font-size="11" fill="#1a1a2a" text-anchor="start" >30000</text>
<text x="733" y="530.5" font-size="11" fill="#1a1a2a" text-anchor="start" >-10000</text>
<text x="733" y="580.5" font-size="11" fill="#1a1a2a" text-anchor="start" >-50000</text>
<path d="M730.5 187.5 L736 182 L792 182 L792 193 L736 193 Z" fill="#111"/>
<text x="736.5" y="191" font-size="11" fill="#fff" text-anchor="start" >12284</text>
<g class="ce" fill="#555">
<rect x="12" y="582" width="1" height="18"/>
<rect x="60" y="582" width="1" height="14"/>
<rect x="126" y="582" width="1" height="28"/>
<rect x="192" y="582" width="1" height="28"/>
<rect x="258" y="582" width="1" height="28"/>
<rect x="324" y="582" width="1" height="28"/>
<rect x="390" y="582" width="1" height="14"/>
<rect x="456" y="582" width="1" height="28"/>
<rect x="522" y="582" width="1" height="28"/>
<rect x="588" y="582" width="1" height="28"/>
<rect x="654" y="582" width="1" height="28"/>
<rect x="720" y="582" width="1" height="18"/>
</g>
<text x="16.3" y="594.5" font-size="11" fill="#1a1a2a" text-anchor="start" >15:00</text>
<text x="64" y="594.5" font-size="11" fill="#1a1a2a" text-anchor="start" >23:00</text>
<text x="130" y="594.5" font-size="11" fill="#1a1a2a" text-anchor="start" >20:00</text>
<text x="129.8" y="610.5" font-size="11" fill="#1a1a2a" text-anchor="start" textLength="43.8">27/04/16</text>
<text x="196" y="594.5" font-size="11" fill="#1a1a2a" text-anchor="start" >17:00</text>
<text x="195.8" y="610.5" font-size="11" fill="#1a1a2a" text-anchor="start" textLength="43.8">28/04/16</text>
<text x="262" y="594.5" font-size="11" fill="#1a1a2a" text-anchor="start" >14:00</text>
<text x="261.8" y="610.5" font-size="11" fill="#1a1a2a" text-anchor="start" textLength="43.8">29/04/16</text>
<text x="328" y="594.5" font-size="11" fill="#1a1a2a" text-anchor="start" >11:00</text>
<text x="327.8" y="610.5" font-size="11" fill="#1a1a2a" text-anchor="start" textLength="43.8">04/05/16</text>
<text x="394" y="594.5" font-size="11" fill="#1a1a2a" text-anchor="start" >22:00</text>
<text x="460" y="594.5" font-size="11" fill="#1a1a2a" text-anchor="start" >19:00</text>
<text x="459.8" y="610.5" font-size="11" fill="#1a1a2a" text-anchor="start" textLength="43.8">05/05/16</text>
<text x="526" y="594.5" font-size="11" fill="#1a1a2a" text-anchor="start" >16:00</text>
<text x="525.8" y="610.5" font-size="11" fill="#1a1a2a" text-anchor="start" textLength="43.8">06/05/16</text>
<text x="592" y="594.5" font-size="11" fill="#1a1a2a" text-anchor="start" >13:00</text>
<text x="591.8" y="610.5" font-size="11" fill="#1a1a2a" text-anchor="start" textLength="43.8">10/05/16</text>
<text x="658" y="594.5" font-size="11" fill="#1a1a2a" text-anchor="start" >10:00</text>
<text x="657.8" y="610.5" font-size="11" fill="#1a1a2a" text-anchor="start" textLength="43.8">11/05/16</text>
<text x="724" y="594.5" font-size="11" fill="#1a1a2a" text-anchor="start" >21:00</text>
<path d="M12 600 L62.5 600 L70 607.5 L62.5 615 L12 615 Z" fill="#000"/>
<text x="15.9" y="610.5" font-size="11" fill="#fff" text-anchor="start" textLength="43.8">26/04/16</text>
<rect class="ce" x="720" y="600" width="51" height="15" fill="#000"/>
<text x="723.9" y="610.5" font-size="11" fill="#fff" text-anchor="start" textLength="43.8">11/05/16</text>
<text x="15.8" y="43" font-size="11" fill="#222" text-anchor="start" textLength="131" lengthAdjust="spacingAndGlyphs">SRM6=ФОРТС(SBRF-6.16)</text>
<text x="15.8" y="446" font-size="11" fill="#999" text-anchor="start" textLength="158.5" lengthAdjust="spacingAndGlyphs">DeltaCumPeriod(SRM6=ФОРТС)</text>
<g class="ce" fill="#000">
<rect x="718" y="40" width="1" height="3"/>
<rect x="718" y="44" width="1" height="2"/>
<rect x="719" y="39" width="1" height="3"/>
<rect x="719" y="43" width="1" height="3"/>
<rect x="720" y="38" width="1" height="3"/>
<rect x="720" y="42" width="1" height="3"/>
<rect x="721" y="37" width="1" height="3"/>
<rect x="721" y="41" width="1" height="3"/>
<rect x="722" y="36" width="1" height="3"/>
<rect x="722" y="40" width="1" height="3"/>
<rect x="723" y="37" width="1" height="3"/>
<rect x="723" y="41" width="1" height="3"/>
<rect x="724" y="38" width="1" height="3"/>
<rect x="724" y="42" width="1" height="3"/>
<rect x="725" y="39" width="1" height="3"/>
<rect x="725" y="43" width="1" height="3"/>
<rect x="726" y="40" width="1" height="3"/>
<rect x="726" y="44" width="1" height="2"/>
</g>
<g class="ce" fill="#000">
<rect x="718" y="443" width="1" height="3"/>
<rect x="718" y="447" width="1" height="2"/>
<rect x="719" y="442" width="1" height="3"/>
<rect x="719" y="446" width="1" height="3"/>
<rect x="720" y="441" width="1" height="3"/>
<rect x="720" y="445" width="1" height="3"/>
<rect x="721" y="440" width="1" height="3"/>
<rect x="721" y="444" width="1" height="3"/>
<rect x="722" y="439" width="1" height="3"/>
<rect x="722" y="443" width="1" height="3"/>
<rect x="723" y="440" width="1" height="3"/>
<rect x="723" y="444" width="1" height="3"/>
<rect x="724" y="441" width="1" height="3"/>
<rect x="724" y="445" width="1" height="3"/>
<rect x="725" y="442" width="1" height="3"/>
<rect x="725" y="446" width="1" height="3"/>
<rect x="726" y="443" width="1" height="3"/>
<rect x="726" y="447" width="1" height="2"/>
</g>
<circle cx="478.8" cy="43.8" r="11.2" fill="url(#bt)"/>
<circle cx="503.8" cy="43.8" r="11.2" fill="url(#bt)"/>
<circle cx="528.8" cy="43.8" r="11.2" fill="url(#bt)"/>
<circle cx="553.8" cy="43.8" r="11.2" fill="url(#bt)"/>
<circle cx="578.8" cy="43.8" r="11.2" fill="url(#bt)"/>
<circle cx="603.8" cy="43.8" r="11.2" fill="url(#bt)"/>
<circle cx="628.8" cy="43.8" r="11.2" fill="url(#bt)"/>
<circle cx="653.8" cy="43.8" r="11.2" fill="url(#bt)"/>
<circle cx="678.8" cy="43.8" r="11.2" fill="url(#bt)"/>
<circle cx="703.8" cy="43.8" r="11.2" fill="url(#bt)"/>
<path d="M471 43.5 L478 36.9 L478 50.1 Z" fill="#585858"/>
<path d="M479 43.5 L486 36.9 L486 50.1 Z" fill="#585858"/>
<path d="M500.2 43.5 L507.2 36.9 L507.2 50.1 Z" fill="#585858"/>
<path d="M532.2 43.5 L525.2 36.9 L525.2 50.1 Z" fill="#585858"/>
<path d="M553 43.5 L546 36.9 L546 50.1 Z" fill="#585858"/>
<path d="M561 43.5 L554 36.9 L554 50.1 Z" fill="#585858"/>
<circle cx="578.5" cy="43.6" r="7.1" fill="none" stroke="#606060" stroke-width="1.15"/>
<path d="M573.9 43.7 H583.3 M578.6 39.0 V48.4" stroke="#555" stroke-width="1.9" fill="none"/>
<circle cx="603.5" cy="43.6" r="7.1" fill="none" stroke="#606060" stroke-width="1.15"/>
<path d="M599.5 43.8 H608.1" stroke="#555" stroke-width="1.8" fill="none"/>
<g stroke="#555" fill="none"><path d="M621.3 37 V49.8 M635.6 37 V49.8" stroke-width="1.3"/><circle cx="629.8" cy="41.5" r="3.4" stroke-width="1.5"/><path d="M627.1 44.2 L622.2 48.8" stroke-width="2"/></g>
<g fill="#555"><rect x="652.55" y="35.1" width="1.6" height="16.6" fill="#606060"/><path d="M646.1 41.75h2.2v-2.85l3.4 3.6l-3.4 3.6v-2.85h-2.2z"/><path d="M660.8 41.75h-2.2v-2.85l-3.4 3.6l3.4 3.6v-2.85h2.2z"/></g>
<g fill="#555"><rect x="677.8" y="35.1" width="1.3" height="16.6"/><rect x="676.15" y="36.3" width="4.6" height="13.4"/><rect x="677.25" y="37.5" width="2.4" height="10.9" fill="#dcdcdc"/><path d="M670.3 41.75h1.8v-2.85l3.5 3.6l-3.5 3.6v-2.85h-1.8z"/><path d="M686.9 41.75h-2v-2.85l-3.5 3.6l3.5 3.6v-2.85h2z"/></g>
<path d="M699 36.9 L706 43.5 L699 50.1 Z" fill="#585858"/><path d="M707.6 37 V50" stroke="#555" stroke-width="1.4" fill="none"/>
<polygon points="14.00,6.90 16.03,13.01 22.46,13.05 17.28,16.87 19.23,23.00 14.00,19.25 8.77,23.00 10.72,16.87 5.54,13.05 11.97,13.01" fill="#00a9ec"/>
<text x="29.6" y="21.6" font-size="16" fill="#f79a00" text-anchor="start" >SRM6=ФОРТС</text>
<text x="156.5" y="21.6" font-size="16" fill="#f79a00" text-anchor="start" >H1</text>
<g class="ce" fill="#4a4a4a">
<rect x="187" y="5" width="1" height="21"/>
<rect x="211" y="5" width="1" height="21"/>
<rect x="238" y="5" width="1" height="21"/>
<rect x="265" y="5" width="1" height="21"/>
<rect x="292" y="5" width="1" height="21"/>
<rect x="319" y="5" width="1" height="21"/>
<rect x="718" y="5" width="1" height="21"/>
</g>
<g class="ce">
<rect x="192" y="11" width="1" height="13" fill="#fff"/>
<rect x="190" y="14" width="5" height="8" fill="#fff"/>
<rect x="191" y="15" width="3" height="6" fill="#a8a8a8"/>
<rect x="198" y="7" width="1" height="13" fill="#fff"/>
<rect x="196" y="9" width="5" height="9" fill="#fff"/>
<rect x="197" y="10" width="3" height="7" fill="#a8a8a8"/>
<rect x="204" y="6" width="1" height="13" fill="#fff"/>
<rect x="202" y="8" width="5" height="9" fill="#fff"/>
<rect x="203" y="9" width="3" height="7" fill="#a8a8a8"/>
</g>
<g transform="translate(220.6,20.5) rotate(-47)"><path d="M0 0 L4.2 -3.1 L15.8 -3.1 L15.8 3.1 L4.2 3.1 Z" fill="#c4c4c4"/><rect x="4.6" y="-2.2" width="6.6" height="4.4" fill="#0a0a0a"/><path d="M5 -0.9 H11 M5 0.9 H11" stroke="#eee" stroke-width="0.8" stroke-dasharray="0.8 0.8"/><rect x="11.6" y="-3.1" width="4.2" height="6.2" fill="#e2e2e2"/><path d="M0 0 L1.9 -1.4 L1.9 1.4 Z" fill="#fff"/></g>
<g class="ce"><rect x="244" y="10" width="18" height="1" fill="#777"/><rect x="244" y="19" width="18" height="1" fill="#777"/>
<rect x="244" y="10" width="3" height="6" fill="#fff"/>
<rect x="245" y="11" width="1" height="4" fill="#555"/>
<rect x="246" y="9" width="3" height="7" fill="#fff"/>
<rect x="247" y="10" width="1" height="5" fill="#555"/>
<rect x="248" y="9" width="3" height="7" fill="#fff"/>
<rect x="249" y="10" width="1" height="5" fill="#555"/>
<rect x="250" y="14" width="9" height="2" fill="#fff"/>
<rect x="250" y="15" width="3" height="3" fill="#fff"/>
<rect x="251" y="16" width="1" height="1" fill="#555"/>
<rect x="252" y="15" width="3" height="5" fill="#fff"/>
<rect x="253" y="16" width="1" height="3" fill="#555"/>
<rect x="254" y="15" width="3" height="6" fill="#fff"/>
<rect x="255" y="16" width="1" height="4" fill="#555"/>
<rect x="256" y="15" width="3" height="5" fill="#fff"/>
<rect x="257" y="16" width="1" height="3" fill="#555"/>
<rect x="258" y="15" width="2" height="3" fill="#fff"/>
<rect x="258" y="11" width="3" height="5" fill="#fff"/>
<rect x="259" y="12" width="1" height="3" fill="#555"/>
<rect x="260" y="9" width="2" height="7" fill="#fff"/>
</g>
<path d="M274.5 6.4 L274.5 22.3 L275.7 22.3 L278.4 19.1 L280.4 22.6 Q281.3 24.5 282.8 24.2 Q284.6 23.7 284.3 22 L282.3 18.6 L285.7 18.3 L285.7 16.9 Z" fill="none" stroke="#fff" stroke-width="1.1" stroke-linejoin="miter"/>
<g class="ce" fill="#fff"><rect x="299" y="7" width="3" height="3"/><rect x="299" y="11" width="5" height="3"/><rect x="299" y="15" width="8" height="3"/><rect x="307" y="16" width="8" height="1"/><rect x="299" y="19" width="5" height="3"/></g>
<ellipse cx="706.5" cy="14.9" rx="8.8" ry="9.1" fill="#fff"/>
<rect x="705.7" y="7.4" width="1.7" height="15.2" fill="#000"/><text x="706.6" y="20.2" font-size="15" font-weight="bold" fill="#000" stroke="#000" stroke-width="0.45" text-anchor="middle">$</text>
<path d="M730.3 9.3 H734.9 V15.5 H737.4 L732.6 21.8 L727.8 15.5 H730.3 Z" fill="none" stroke="#fff" stroke-width="1.2"/>
<g class="ce"><rect x="753" y="11" width="14" height="10" fill="#999"/><rect x="756" y="15" width="8" height="3" fill="#1a1a1a"/></g>
<path d="M777 10 L787.6 20.2 M787.6 10 L777 20.2" stroke="#aaa" stroke-width="3.4" fill="none"/>
</svg></body></html>
